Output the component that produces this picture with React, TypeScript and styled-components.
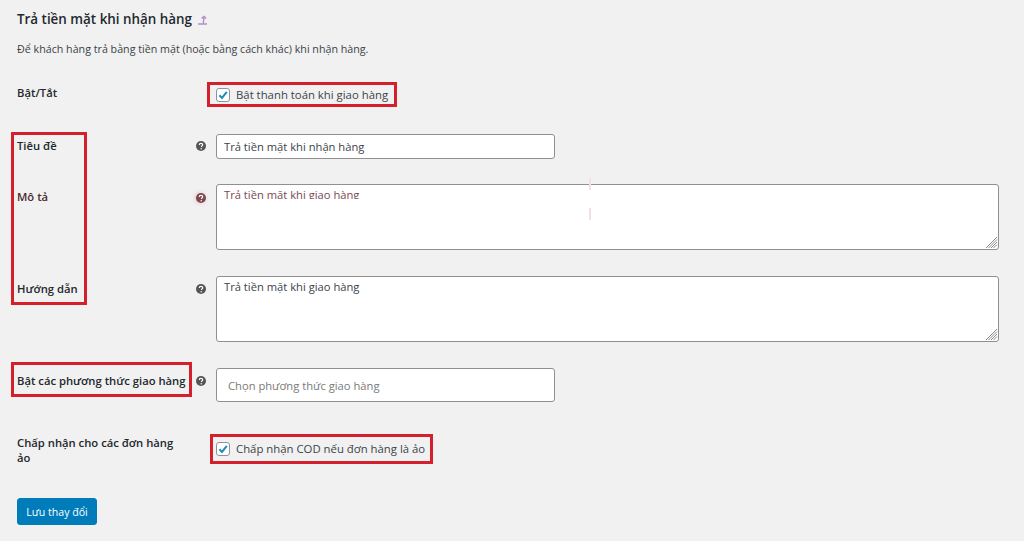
import styled, { createGlobalStyle } from 'styled-components';

const GlobalStyle = createGlobalStyle`
  html, body {
    margin: 0;
    padding: 0;
    background: #f1f1f1;
  }
  body {
    font-family: "Open Sans", "Noto Sans", sans-serif;
    color: #23282d;
  }
`;

const Page = styled.div`
  position: relative;
  width: 1024px;
  height: 541px;
  overflow: hidden;
  box-sizing: border-box;
  padding: 10px 25px 0 17px;
  background: #f1f1f1;
`;

const Heading = styled.h2`
  display: flex;
  align-items: center;
  gap: 5px;
  margin: 0;
  height: 19px;
  font-size: 13.4px;
  line-height: 19px;
  font-weight: 600;
  color: #23282d;
`;

const Intro = styled.p`
  margin: 11px 0 0;
  font-size: 10.7px;
  line-height: 18px;
  color: #3c434a;
`;

const Form = styled.div`
  display: flex;
  flex-direction: column;
  margin-top: 27px;
`;

const Row = styled.div<{ $height: number }>`
  display: grid;
  grid-template-columns: 179px 20px 1fr;
  height: ${props => props.$height}px;
`;

const Label = styled.div<{ $top: number; $tint?: boolean }>`
  padding-top: ${props => props.$top}px;
  font-size: 11.25px;
  line-height: 15px;
  font-weight: 600;
  color: ${props => (props.$tint ? '#4a2a30' : '#23282d')};
`;

const HelpCell = styled.div<{ $top: number }>`
  padding-top: ${props => props.$top}px;
`;

const Field = styled.div<{ $top: number }>`
  position: relative;
  padding-top: ${props => props.$top}px;
`;

const TextInput = styled.input`
  display: block;
  box-sizing: border-box;
  width: 339px;
  height: 25px;
  margin: 0;
  padding: 0 7px;
  border: 1px solid #909090;
  border-radius: 3px;
  background: #fff;
  font-family: inherit;
  font-size: 11.2px;
  color: #3c434a;
  outline: none;
`;

const SelectInput = styled(TextInput)`
  height: 34px;
  padding: 0 11px;
  &::placeholder {
    color: #7a7a7a;
    opacity: 1;
  }
`;

const TextArea = styled.textarea<{ $tint?: boolean }>`
  display: block;
  box-sizing: border-box;
  width: 783px;
  height: 66px;
  margin: 0;
  padding: 2px 7px;
  border: 1px solid #909090;
  border-radius: 3px;
  background: #fff;
  font-family: inherit;
  font-size: 11.2px;
  line-height: 15px;
  color: ${props => (props.$tint ? '#7a4a52' : '#3c434a')};
  outline: none;
  resize: none;
`;

const Grip = styled.svg`
  position: absolute;
  left: 769px;
  top: 52px;
  width: 13px;
  height: 13px;
`;

const CheckLine = styled.label`
  display: flex;
  align-items: center;
  gap: 6px;
  height: 14px;
  font-size: 11.35px;
  line-height: 14px;
  color: #3c434a;
`;

const CheckBox = styled.span`
  display: flex;
  align-items: center;
  justify-content: center;
  box-sizing: border-box;
  width: 14px;
  height: 14px;
  border: 1px solid #8c939c;
  border-radius: 3px;
  background: #fff;
`;

const SaveButton = styled.button`
  display: block;
  box-sizing: border-box;
  width: 80px;
  height: 27px;
  margin: 0;
  padding: 0;
  border: 1px solid #007cba;
  border-radius: 3px;
  background: #007cba;
  color: #fff;
  font-family: inherit;
  font-size: 10.6px;
`;

const Annotation = styled.div<{ $x: number; $y: number; $w: number; $h: number }>`
  position: absolute;
  left: ${props => props.$x}px;
  top: ${props => props.$y}px;
  width: ${props => props.$w}px;
  height: ${props => props.$h}px;
  box-sizing: border-box;
  border: 3px solid #d3202c;
  pointer-events: none;
`;

const ClipStrip = styled.div`
  position: absolute;
  left: 222px;
  top: 199px;
  width: 145px;
  height: 5px;
  background: #fff;
`;

const Smudge = styled.div<{ $y: number; $h: number }>`
  position: absolute;
  left: 589px;
  top: ${props => props.$y}px;
  width: 2px;
  height: ${props => props.$h}px;
  background: #f6dfe2;
`;

const HelpGlyph = styled.svg<{ $tint?: boolean }>`
  display: block;
  width: 10px;
  height: 10px;
  filter: ${props => (props.$tint ? 'drop-shadow(-1px 0 2px #f0bcbc)' : 'none')};
`;

const HelpIcon = ({ tint }: { tint?: boolean }) => (
  <HelpGlyph $tint={tint} viewBox="0 0 10 10">
    <circle cx="5" cy="5" r="5" fill={tint ? '#7a4a50' : '#555'} />
    <path d="M3.3 3.9c0-1 .8-1.5 1.7-1.5s1.7.5 1.7 1.4c0 1.2-1.3 1.1-1.3 2.1" fill="none" stroke="#fff" strokeWidth="1.2" />
    <circle cx="5.2" cy="7.7" r=".75" fill="#fff" />
  </HelpGlyph>
);

const CheckMark = () => (
  <svg width="12" height="12" viewBox="0 0 12 12">
    <path d="M2.4 6.2 5 8.9 9.8 2.8" fill="none" stroke="#1e8cbe" strokeWidth="2" />
  </svg>
);

const LinkArrow = () => (
  <svg width="11" height="10" viewBox="0 0 11 10">
    <path d="M1 9h9M6.3 8.5 7 2M4.6 3.4 7.2 1.4l1.9 2" fill="none" stroke="#b48fc8" strokeWidth="1.4" />
  </svg>
);

const ResizeGrip = () => (
  <Grip viewBox="0 0 13 13">
    <path d="M1 12 12 1M3.5 12 12 3.5M6 12l6-6M8.5 12 12 8.5" fill="none" stroke="#8a8a8a" strokeWidth="1" />
  </Grip>
);

export default function App() {
  return (
    <Page>
      <GlobalStyle />
      <Heading>
        Trả tiền mặt khi nhận hàng
        <LinkArrow />
      </Heading>
      <Intro>Để khách hàng trả bằng tiền mặt (hoặc bằng cách khác) khi nhận hàng.</Intro>
      <Form>
        <Row $height={49}>
          <Label $top={0}>Bật/Tắt</Label>
          <div />
          <Field $top={3}>
            <CheckLine>
              <CheckBox><CheckMark /></CheckBox>
              Bật thanh toán khi giao hàng
            </CheckLine>
          </Field>
        </Row>
        <Row $height={50}>
          <Label $top={4}>Tiêu đề</Label>
          <HelpCell $top={7}><HelpIcon /></HelpCell>
          <Field $top={0}><TextInput defaultValue="Trả tiền mặt khi nhận hàng" /></Field>
        </Row>
        <Row $height={92}>
          <Label $top={5} $tint>Mô tả</Label>
          <HelpCell $top={9}><HelpIcon tint /></HelpCell>
          <Field $top={0}>
            <TextArea $tint defaultValue="Trả tiền mặt khi giao hàng" />
            <ResizeGrip />
          </Field>
        </Row>
        <Row $height={92}>
          <Label $top={5}>Hướng dẫn</Label>
          <HelpCell $top={8}><HelpIcon /></HelpCell>
          <Field $top={0}>
            <TextArea defaultValue="Trả tiền mặt khi giao hàng" />
            <ResizeGrip />
          </Field>
        </Row>
        <Row $height={66}>
          <Label $top={5}>Bật các phương thức giao hàng</Label>
          <HelpCell $top={8}><HelpIcon /></HelpCell>
          <Field $top={0}><SelectInput placeholder="Chọn phương thức giao hàng" /></Field>
        </Row>
        <Row $height={64}>
          <Label $top={1}>Chấp nhận cho các đơn hàng<br />ảo</Label>
          <div />
          <Field $top={8}>
            <CheckLine>
              <CheckBox><CheckMark /></CheckBox>
              Chấp nhận COD nếu đơn hàng là ảo
            </CheckLine>
          </Field>
        </Row>
        <SaveButton>Lưu thay đổi</SaveButton>
      </Form>
      <ClipStrip />
      <Smudge $y={178} $h={12} />
      <Smudge $y={208} $h={12} />
      <Annotation $x={207} $y={82} $w={190} $h={25} />
      <Annotation $x={11} $y={132} $w={76} $h={173} />
      <Annotation $x={11} $y={362} $w={181} $h={35} />
      <Annotation $x={210} $y={434} $w={223} $h={30} />
    </Page>
  );
}
